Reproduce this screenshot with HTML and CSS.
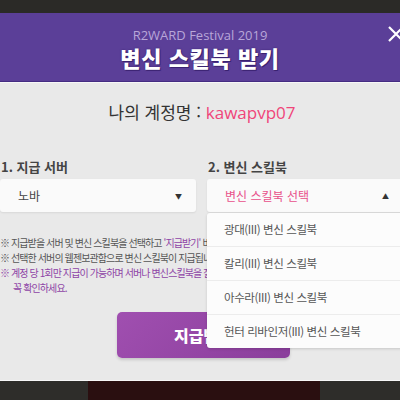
FILE: index.html
```html
<!DOCTYPE html>
<html lang="ko">
<head>
<meta charset="utf-8">
<link rel="stylesheet" href="styles.css">
</head>
<body>
<div class="top"></div>
<div class="modal">
  <div class="header">
    <div class="sub">R2WARD Festival 2019</div>
    <div class="title">변신 스킬북 받기</div>
    <svg class="close" width="16" height="16" viewBox="0 0 16 16"><path d="M1 1L15 15M15 1L1 15" stroke="#fff" stroke-width="2.2"/></svg>
  </div>
  <div class="content">
    <div class="account">나의 계정명 : <span class="id">kawapvp07</span></div>
    <div class="cols">
      <div class="col">
        <div class="label">1. 지급 서버</div>
        <div class="select"><span>노바</span><span class="arrow">▼</span></div>
      </div>
      <div class="col">
        <div class="label">2. 변신 스킬북</div>
        <div class="select sel2"><span class="pink">변신 스킬북 선택</span><span class="arrow">▲</span></div>
        <ul class="dropdown">
          <li>광대(III) 변신 스킬북</li>
          <li>칼리(III) 변신 스킬북</li>
          <li>아수라(III) 변신 스킬북</li>
          <li>헌터 리바인저(III) 변신 스킬북</li>
        </ul>
      </div>
    </div>
    <div class="notes">
      <p>※ 지급받을 서버 및 변신 스킬북을 선택하고 <span class="purple">'지급받기'</span> 버튼을</p>
      <p>※ 선택한 서버의 웹젠보관함으로 변신 스킬북이 지급됩니다.</p>
      <p class="purple">※ 계정 당 1회만 지급이 가능하며 서버나 변신스킬북을 잘못</p>
      <p class="purple indent">꼭 확인하세요.</p>
    </div>
    <div class="btnrow"><button class="btn">지급받기</button></div>
  </div>
</div>
<div class="footer"><div class="bg"></div></div>
</body>
</html>
```
FILE: styles.css
```css
html, body { margin: 0; padding: 0; width: 400px; height: 400px; overflow: hidden; }
body { background: #2e2d2a; font-family: "Noto Sans CJK KR", "Noto Sans", sans-serif; }
.top { height: 13px; background: #2b2a27; }
.modal { width: 400px; }
.header { position: relative; height: 68px; background: #5b3f98; border-bottom: 1px solid #452c82; text-align: center; }
.sub { padding-top: 14px; font-family: "Open Sans", "Noto Sans", sans-serif; font-size: 13px; line-height: 17px; color: #b8a6d8; }
.title { font-size: 22px; line-height: 27px; font-weight: 900; color: #fff; text-shadow: 1px 1px 0 #3a2270, 0 0 2px #3a2270; letter-spacing: 0.6px; }
.close { position: absolute; left: 388px; top: 13px; }
.content { position: relative; height: 297px; background: #e9e9e9; border-top: 1px solid #f7f7f7; border-bottom: 1px solid #f7f7f7; }
.account { padding-top: 17px; text-align: center; font-size: 17px; line-height: 24px; color: #333; margin-left: 4px; }
.id { color: #f0457a; font-family: "Open Sans", sans-serif; }
.cols { display: grid; grid-template-columns: 196px 200px; column-gap: 11px; margin-top: 33px; }
.col { position: relative; }
.label { font-size: 13px; font-weight: 700; color: #444; line-height: 18px; padding-left: 1px; }
.select { margin-top: 3px; height: 33px; background: #fafafa; border-radius: 3px; box-shadow: 0 1px 2px rgba(0,0,0,0.08); display: flex; align-items: center; justify-content: space-between; padding: 0 14px 0 18px; font-size: 12px; color: #444; }
.sel2 { padding-right: 18px; }
.arrow { font-size: 7px; color: #333; }
.pink { color: #e8508a; }
.dropdown { position: absolute; left: 0; top: 55px; width: 200px; margin: 0; padding: 0; list-style: none; background: #fcfcfc; border-radius: 3px; box-shadow: 0 1px 3px rgba(0,0,0,0.15); z-index: 2; }
.dropdown li { height: 33px; line-height: 33px; padding-left: 17px; font-size: 11.5px; letter-spacing: -0.4px; color: #555; border-top: 1px solid #ececec; }
.dropdown li:first-child { border-top: none; }
.notes { margin-top: 23px; width: 207px; overflow: hidden; white-space: nowrap; }
.notes p { margin: 0; font-size: 10px; letter-spacing: -0.9px; line-height: 15px; color: #555; }
.purple { color: #8e44a6; }
.notes p.purple { color: #8e44a6; }
.indent { padding-left: 13px; }
.btnrow { display: flex; justify-content: flex-start; padding-left: 117px; margin-top: 17px; }
.btn { width: 173px; height: 46px; border: none; border-radius: 5px; background: linear-gradient(135deg, #a04fb0, #8a3e9b); color: #fff; font-family: "Noto Sans CJK KR", sans-serif; font-size: 16px; font-weight: 900; box-shadow: 0 2px 3px rgba(0,0,0,0.15); }
.footer { height: 20px; background: #2e2d2a; }
.footer .bg { margin-left: 88px; width: 232px; height: 20px; background: #2a0f10; }
```
